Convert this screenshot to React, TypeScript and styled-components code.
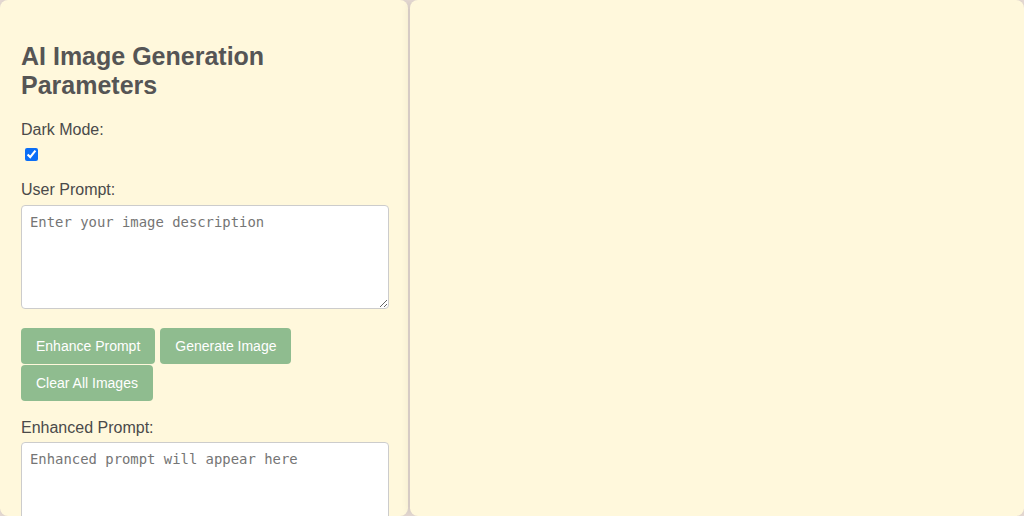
import React from "react";
import styled, { createGlobalStyle } from "styled-components";

const Global = createGlobalStyle`
  html, body { margin: 0; padding: 0; }
  body {
    background: #e9ddd6;
    font-family: "Liberation Sans", Arial, Helvetica, sans-serif;
    color: #4a4a4a;
  }
  * { box-sizing: border-box; }
`;

const Layout = styled.div`
  display: flex;
  gap: 2px;
  height: 100vh;
`;

const Panel = styled.div<{ $side?: boolean }>`
  background: #fff8dc;
  border-radius: 8px;
  box-shadow: 0 0 10px rgba(0, 0, 0, 0.1);
  overflow: hidden;
  ${(p) => (p.$side ? "flex: 0 0 408px; padding: 20px 19px 20px 21px;" : "flex: 1;")}
`;

const Title = styled.h2`
  font-size: 25px;
  font-weight: bold;
  color: #555;
  margin: 22px 0 21px;
  line-height: 29px;
`;

const Label = styled.label<{ $gap?: number }>`
  display: block;
  font-size: 16px;
  color: #4a4a4a;
  margin-bottom: ${(p) => p.$gap ?? 6}px;
  line-height: 18px;
`;

const Field = styled.div<{ $mb?: number }>`
  margin-bottom: ${(p) => p.$mb ?? 16}px;
`;

const Check = styled.input`
  width: 13px;
  height: 13px;
  margin: 9px 0 0 4px;
  accent-color: #0b6ef6;
  display: block;
`;

const Area = styled.textarea`
  display: block;
  width: 100%;
  height: 104px;
  padding: 8px;
  border: 1px solid #ccc;
  border-radius: 4px;
  background: #fff;
  font-family: "DejaVu Sans Mono", monospace;
  font-size: 13.9px;
  line-height: 16px;
  color: #333;
  resize: vertical;
  &::placeholder { color: #757575; }
`;

const Buttons = styled.div`
  display: flex;
  flex-wrap: wrap;
  column-gap: 5px;
  row-gap: 1px;
  margin: 19px 0 18px;
`;

const Button = styled.button`
  background: #8fbc8f;
  color: #fff;
  border: none;
  border-radius: 4px;
  padding: 0 15px;
  height: 36px;
  font-family: "Liberation Sans", Arial, sans-serif;
  font-size: 14px;
  cursor: pointer;
`;

export default function App() {
  return (
    <>
      <Global />
      <Layout>
        <Panel $side>
          <Title>
            AI Image Generation
            <br />
            Parameters
          </Title>
          <Field $mb={20}>
            <Label>Dark Mode:</Label>
            <Check type="checkbox" defaultChecked />
          </Field>
          <Field $mb={0}>
            <Label>User Prompt:</Label>
            <Area placeholder="Enter your image description" />
          </Field>
          <Buttons>
            <Button>Enhance Prompt</Button>
            <Button>Generate Image</Button>
            <Button>Clear All Images</Button>
          </Buttons>
          <Field>
            <Label $gap={5}>Enhanced Prompt:</Label>
            <Area placeholder="Enhanced prompt will appear here" />
          </Field>
        </Panel>
        <Panel />
      </Layout>
    </>
  );
}
